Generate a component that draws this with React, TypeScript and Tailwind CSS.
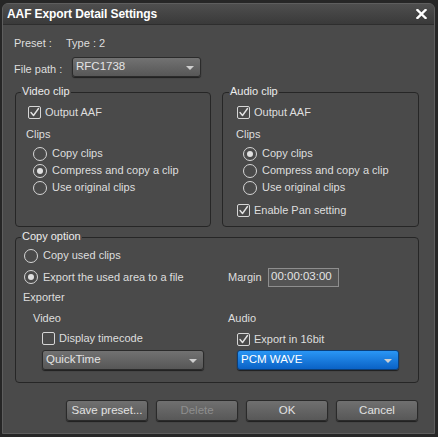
import React from "react";

const font = { fontFamily: '"Liberation Sans", Arial, sans-serif' };

function Check({ checked }: { checked: boolean }) {
  return (
    <span className="w-[13px] h-[13px] shrink-0 rounded-[2px] border border-[#d6d6d6] flex items-center justify-center">
      {checked && (
        <svg width="11" height="11" viewBox="0 0 11 11">
          <path d="M2 5.5 L4.5 8.5 L9.5 1.5" fill="none" stroke="#e2e2e2" strokeWidth="1.4" strokeLinejoin="round" strokeLinecap="round" />
        </svg>
      )}
    </span>
  );
}

function Radio({ checked }: { checked: boolean }) {
  return (
    <span className="w-[14px] h-[14px] shrink-0 rounded-full border-[1.5px] border-[#d6d6d6] flex items-center justify-center">
      {checked && <span className="w-[6px] h-[6px] rounded-full bg-[#e0e0e0]" />}
    </span>
  );
}

function CheckRow({ checked, label, className = "" }: { checked: boolean; label: string; className?: string }) {
  return (
    <div className={"flex items-center gap-[4px] h-[16px] " + className}>
      <Check checked={checked} />
      <span>{label}</span>
    </div>
  );
}

function RadioRow({ checked, label, className = "" }: { checked: boolean; label: string; className?: string }) {
  return (
    <div className={"flex items-center gap-[5px] h-[17px] " + className}>
      <Radio checked={checked} />
      <span>{label}</span>
    </div>
  );
}

function Arrow() {
  return (
    <svg width="8" height="4" viewBox="0 0 8 4" className="shrink-0 mt-[2px]">
      <path d="M0 0 H8 L4 4 Z" fill="#cfcfcf" />
    </svg>
  );
}

function Dropdown({ label, className = "", blue = false }: { label: string; className?: string; blue?: boolean }) {
  return (
    <div
      className={
        "h-[20px] rounded-[3px] border flex items-center justify-between pl-[3px] pr-[6px] shadow-[0_1px_1px_rgba(0,0,0,0.6)] " +
        (blue
          ? "border-[#0b3f7a] bg-gradient-to-b from-[#2a96f5] to-[#0a62c6] text-white "
          : "border-[#2b2b2b] bg-gradient-to-b from-[#727272] to-[#575757] text-[#e4e4e4] ") +
        className
      }
    >
      <span className="text-[11.5px]">{label}</span>
      <Arrow />
    </div>
  );
}

function Button({ label, disabled = false }: { label: string; disabled?: boolean }) {
  return (
    <div
      className={
        "w-[82px] h-[21px] rounded-[3px] border border-[#2a2a2a] bg-gradient-to-b from-[#707070] to-[#585858] flex items-center justify-center shadow-[0_1px_1px_rgba(0,0,0,0.6)] text-[11.5px] " +
        (disabled ? "text-[#8e8e8e]" : "text-[#e2e2e2]")
      }
    >
      {label}
    </div>
  );
}

export default function App() {
  return (
    <div className="w-[438px] h-[437px] bg-[#262626] pt-[3px] pl-[2px] pr-[3px] pb-[3px]" style={font}>
      <div className="w-full h-full rounded-t-[6px] border border-[#5e5e5e] bg-[#4a4a4a] flex flex-col overflow-hidden text-[#dedede] text-[11px] leading-none">
        {/* Title bar */}
        <div className="h-[21px] shrink-0 flex items-center justify-between pl-[4px] pr-[7px] bg-gradient-to-b from-[#4e4e4e] to-[#3a3a3a] border-b border-[#2e2e2e]">
          <span className="text-white font-bold text-[12px] tracking-[-0.1px]">AAF Export Detail Settings</span>
          <svg width="11" height="10" viewBox="0 0 11 10">
            <path d="M1.5 1 L9.5 9 M9.5 1 L1.5 9" stroke="#ffffff" strokeWidth="2.4" strokeLinecap="square" />
          </svg>
        </div>

        {/* Body */}
        <div className="flex-1 pl-[11px] pr-[15px] pt-[10px] flex flex-col">
          <div className="h-[16px] flex items-center">
            <span className="w-[52px]">Preset :</span>
            <span>Type : 2</span>
          </div>
          <div className="mt-[6px] flex items-center">
            <span className="w-[58px] pt-[4px]">File path :</span>
            <Dropdown label="RFC1738" className="w-[129px]" />
          </div>

          {/* Clip groups */}
          <div className="mt-[8px] ml-[1px] flex gap-[11px]">
            <fieldset className="w-[196px] h-[142px] border border-[#262626] rounded-[4px]">
              <legend className="ml-[5px] px-[1px] h-[14px] leading-[12px] text-[#ececec]">Video clip</legend>
              <div className="pl-[12px]">
                <CheckRow checked label="Output AAF" className="mt-[5px]" />
                <div className="mt-[6px] h-[16px] flex items-center -ml-[2px]">Clips</div>
                <div className="mt-[3px] pl-[5px]">
                  <RadioRow checked={false} label="Copy clips" />
                  <RadioRow checked label="Compress and copy a clip" />
                  <RadioRow checked={false} label="Use original clips" />
                </div>
              </div>
            </fieldset>
            <fieldset className="w-[197px] h-[142px] border border-[#262626] rounded-[4px]">
              <legend className="ml-[6px] px-[1px] h-[14px] leading-[12px] text-[#ececec]">Audio clip</legend>
              <div className="pl-[14px]">
                <CheckRow checked label="Output AAF" className="mt-[5px]" />
                <div className="mt-[6px] h-[16px] flex items-center -ml-[1px]">Clips</div>
                <div className="mt-[3px] pl-[6px]">
                  <RadioRow checked label="Copy clips" />
                  <RadioRow checked={false} label="Compress and copy a clip" />
                  <RadioRow checked={false} label="Use original clips" />
                </div>
                <CheckRow checked label="Enable Pan setting" className="mt-[6px]" />
              </div>
            </fieldset>
          </div>

          {/* Copy option */}
          <fieldset className="mt-[3px] ml-[1px] h-[153px] border border-[#262626] rounded-[4px]">
            <legend className="ml-[5px] px-[1px] h-[14px] leading-[12px] text-[#ececec]">Copy option</legend>
            <div className="pl-[8px]">
              <RadioRow checked={false} label="Copy used clips" className="mt-[3px]" />
              <div className="mt-[3px] h-[20px] flex items-center">
                <div className="w-[204px]">
                  <RadioRow checked label="Export the used area to a file" />
                </div>
                <span className="w-[40px]">Margin</span>
                <div className="w-[71px] h-[19px] border border-[#8e8e8e] bg-[#545454] flex items-center pl-[2px] text-[11.5px] text-[#e4e4e4]">
                  00:00:03:00
                </div>
              </div>
              <div className="mt-[2px] h-[16px] flex items-center -ml-[1px]">Exporter</div>
              <div className="mt-[5px] flex">
                <div className="w-[204px] pl-[9px]">
                  <div className="h-[16px] flex items-center">Video</div>
                  <CheckRow checked={false} label="Display timecode" className="mt-[4px] pl-[9px]" />
                  <Dropdown label="QuickTime" className="mt-[4px] ml-[9px] w-[162px]" />
                </div>
                <div>
                  <div className="h-[16px] flex items-center">Audio</div>
                  <CheckRow checked label="Export in 16bit" className="mt-[5px] pl-[9px]" />
                  <Dropdown label="PCM WAVE" blue className="mt-[3px] ml-[9px] w-[162px]" />
                </div>
              </div>
            </div>
          </fieldset>

          {/* Buttons */}
          <div className="mt-[17px] mr-[1px] flex justify-end gap-[8px]">
            <Button label="Save preset..." />
            <Button label="Delete" disabled />
            <Button label="OK" />
            <Button label="Cancel" />
          </div>
        </div>
      </div>
    </div>
  );
}
